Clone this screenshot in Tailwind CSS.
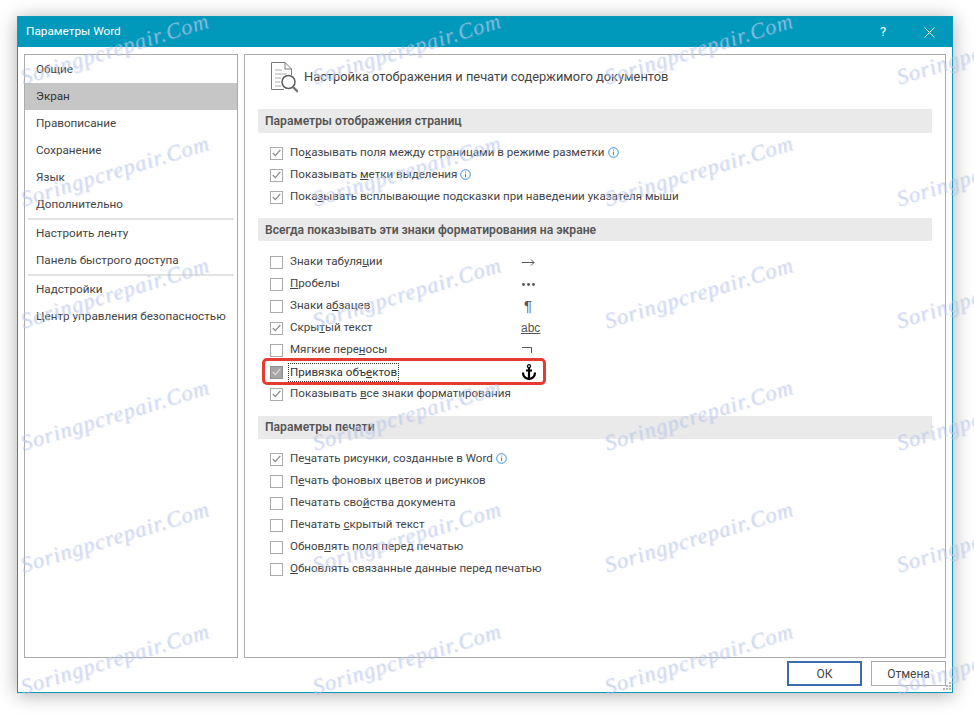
<!DOCTYPE html>
<html lang="ru">
<head>
<meta charset="utf-8">
<script src="https://cdn.jsdelivr.net/npm/@tailwindcss/browser@4"></script>
</head>
<body class="bg-white">
<div class="relative w-[974px] h-[716px] overflow-hidden bg-white pt-[16px] pl-[17px] font-['Roboto','Noto_Sans',sans-serif] text-[11.6px] text-[#444]">
  <div class="w-[936px] h-[677px] flex flex-col border border-[#0f97b8] bg-white shadow-[0_2px_18px_rgba(0,0,0,0.32)]">
    <div class="h-[30px] shrink-0 bg-[#0099bc] flex items-center pl-[8px] text-white text-[11.8px]">
      <span class="flex-1">Параметры Word</span>
      <span class="w-[8px] mr-[36px] text-[13px]">?</span>
      <svg class="mr-[17px]" width="11" height="11" viewBox="0 0 11 11"><path d="M.5.5l10 10M10.5.5l-10 10" stroke="#fff" stroke-width="1" fill="none"/></svg>
    </div>
    <div class="flex gap-[6px] pt-[7px] pl-[6px] pr-[6px] h-[611px] shrink-0">
      <nav class="w-[214px] h-[604px] border border-[#ababab] pt-[1px] whitespace-nowrap text-[11.7px]">
        <div class="h-[27px] flex items-center pl-[11px]">Общие</div>
        <div class="h-[27px] flex items-center pl-[11px] bg-[#c6c6c6] text-[#333]">Экран</div>
        <div class="h-[27px] flex items-center pl-[11px]">Правописание</div>
        <div class="h-[27px] flex items-center pl-[11px]">Сохранение</div>
        <div class="h-[27px] flex items-center pl-[11px]">Язык</div>
        <div class="h-[27px] flex items-center pl-[11px]">Дополнительно</div>
        <div class="mx-[3px] h-[2px] bg-[#e3e3e3]"></div>
        <div class="h-[27px] flex items-center pl-[11px]">Настроить ленту</div>
        <div class="h-[27px] flex items-center pl-[11px]">Панель быстрого доступа</div>
        <div class="mx-[3px] h-[2px] bg-[#e3e3e3]"></div>
        <div class="h-[27px] flex items-center pl-[11px]">Надстройки</div>
        <div class="h-[27px] flex items-center pl-[11px]">Центр управления безопасностью</div>
      </nav>
      <main class="w-[702px] h-[604px] border border-[#ababab] pl-[13px] pr-[13px]">
        <div class="h-[54px] flex items-start pt-[7px] pl-[13px]">
          <svg width="27" height="31" viewBox="0 0 27 31" fill="none" stroke="#7d7777">
            <path d="M.5 .5H14L20.5 7V13M.5 .5V27.5H13" />
            <path d="M14 .5V7H20.5" />
            <path d="M4 8H11M4 12H16M4 16H10M4 20H9M4 24H10" stroke="#aaa"/>
            <circle cx="17.5" cy="20" r="6.5" stroke-width="1.5" stroke="#5c5c5c"/>
            <path d="M22 25L27 30" stroke-width="2.4" stroke="#777"/>
          </svg>
          <span class="ml-[6px] mt-[6px] text-[12.85px] leading-[18px]">Настройка отображения и печати содержимого документов</span>
        </div>

        <div class="h-[24px] bg-[#eaeaea] flex items-center pl-[7px] font-semibold text-[12.15px] text-[#555]">Параметры отображения страниц</div>
        <div class="pt-[9px] pb-[10px]">
          <div class="h-[22px] flex items-center pl-[12px] gap-[7px]"><span class="w-[13px] h-[13px] border border-[#ababab] flex items-center justify-center"><svg width="9" height="8" viewBox="0 0 9 8"><path d="M.8 4L3.3 6.6 8.3.8" fill="none" stroke="#888" stroke-width="1.2"/></svg></span><span class="flex items-center gap-[3px]"><span>По<u>к</u>азывать поля между страницами в режиме разметки</span><svg width="11" height="11" viewBox="0 0 11 11"><circle cx="5.5" cy="5.5" r="4.8" fill="none" stroke="#3f8fd2"/><path d="M5.5 2.6v1M5.5 4.6v3.6" stroke="#3f8fd2"/></svg></span></div>
          <div class="h-[22px] flex items-center pl-[12px] gap-[7px]"><span class="w-[13px] h-[13px] border border-[#ababab] flex items-center justify-center"><svg width="9" height="8" viewBox="0 0 9 8"><path d="M.8 4L3.3 6.6 8.3.8" fill="none" stroke="#888" stroke-width="1.2"/></svg></span><span class="flex items-center gap-[3px]"><span>Показывать <u>м</u>етки выделения</span><svg width="11" height="11" viewBox="0 0 11 11"><circle cx="5.5" cy="5.5" r="4.8" fill="none" stroke="#3f8fd2"/><path d="M5.5 2.6v1M5.5 4.6v3.6" stroke="#3f8fd2"/></svg></span></div>
          <div class="h-[22px] flex items-center pl-[12px] gap-[7px]"><span class="w-[13px] h-[13px] border border-[#ababab] flex items-center justify-center"><svg width="9" height="8" viewBox="0 0 9 8"><path d="M.8 4L3.3 6.6 8.3.8" fill="none" stroke="#888" stroke-width="1.2"/></svg></span><span>Пока<u>з</u>ывать всплывающие подсказки при наведении указателя мыши</span></div>
        </div>

        <div class="h-[23px] pt-[2px] bg-[#eaeaea] flex items-center pl-[7px] font-semibold text-[12.15px] text-[#555]">Всегда показывать эти знаки форматирования на экране</div>
        <div class="pt-[10px] pb-[11px]">
          <div class="h-[22px] flex items-center pl-[12px] gap-[7px]"><span class="w-[13px] h-[13px] border border-[#ababab]"></span><span class="w-[225px]">Знаки табуля<u>ц</u>ии</span><svg width="13" height="7" viewBox="0 0 13 7" fill="none" stroke="#555"><path d="M0 3.5H12M9 .5L12 3.5 9 6.5"/></svg></div>
          <div class="h-[22px] flex items-center pl-[12px] gap-[7px]"><span class="w-[13px] h-[13px] border border-[#ababab]"></span><span class="w-[225px]"><u>П</u>робелы</span><svg width="13" height="3" viewBox="0 0 13 3" fill="#555"><circle cx="1.5" cy="1.5" r="1.4"/><circle cx="6.5" cy="1.5" r="1.4"/><circle cx="11.5" cy="1.5" r="1.4"/></svg></div>
          <div class="h-[22px] flex items-center pl-[12px] gap-[7px]"><span class="w-[13px] h-[13px] border border-[#ababab]"></span><span class="w-[225px]">Знаки а<u>б</u>зацев</span><span class="text-[15px] font-['Liberation_Sans'] ml-[2px] text-[#555]">¶</span></div>
          <div class="h-[22px] flex items-center pl-[12px] gap-[7px]"><span class="w-[13px] h-[13px] border border-[#ababab] flex items-center justify-center"><svg width="9" height="8" viewBox="0 0 9 8"><path d="M.8 4L3.3 6.6 8.3.8" fill="none" stroke="#888" stroke-width="1.2"/></svg></span><span class="w-[225px]">Скры<u>т</u>ый текст</span><span class="font-['Liberation_Sans'] text-[12px] underline text-[#555] -ml-[1px]">abc</span></div>
          <div class="h-[22px] flex items-center pl-[12px] gap-[7px]"><span class="w-[13px] h-[13px] border border-[#ababab]"></span><span class="w-[225px]">Мягкие пере<u>н</u>осы</span><svg width="10" height="6" viewBox="0 0 10 6" fill="none" stroke="#555"><path d="M0 .5H9.5V6"/></svg></div>
          <div class="relative h-[22px] flex items-center pl-[12px] gap-[7px]">
            <span class="w-[13px] h-[13px] border border-[#8f8f8f] bg-[#a9a5a6] flex items-center justify-center"><svg width="9" height="8" viewBox="0 0 9 8"><path d="M.8 4L3.3 6.6 8.3.8" fill="none" stroke="#ddd" stroke-width="1.2"/></svg></span>
            <span class="w-[225px]"><span class="-ml-[2px] px-[1px] border border-dotted border-[#333] text-[#333] inline-block leading-[17px]">Привязка объ<u>е</u>ктов</span></span>
            <svg width="14" height="16" viewBox="0 0 14 16" fill="none" stroke="#000" stroke-width="2.2"><circle cx="7" cy="2.2" r="1.5" stroke-width="1.3"/><path d="M7 3.5V15M4 6.5H10M1 8.5C1 12.5 4 14.5 7 15 10 14.5 13 12.5 13 8.5"/></svg>
            <div class="absolute left-[4px] top-[-3px] w-[284px] h-[27px] border-[3px] border-[#e53b30] rounded-[5px]"></div>
          </div>
          <div class="h-[22px] flex items-center pl-[12px] gap-[7px]"><span class="w-[13px] h-[13px] border border-[#ababab] flex items-center justify-center"><svg width="9" height="8" viewBox="0 0 9 8"><path d="M.8 4L3.3 6.6 8.3.8" fill="none" stroke="#888" stroke-width="1.2"/></svg></span><span>Показывать <u>в</u>се знаки форматирования</span></div>
        </div>

        <div class="h-[23px] bg-[#eaeaea] flex items-center pl-[7px] font-semibold text-[12.15px] text-[#555]">Параметры печати</div>
        <div class="pt-[9px]">
          <div class="h-[22px] flex items-center pl-[12px] gap-[7px]"><span class="w-[13px] h-[13px] border border-[#ababab] flex items-center justify-center"><svg width="9" height="8" viewBox="0 0 9 8"><path d="M.8 4L3.3 6.6 8.3.8" fill="none" stroke="#888" stroke-width="1.2"/></svg></span><span class="flex items-center gap-[3px]"><span>Пе<u>ч</u>атать рисунки, созданные в Word</span><svg width="11" height="11" viewBox="0 0 11 11"><circle cx="5.5" cy="5.5" r="4.8" fill="none" stroke="#3f8fd2"/><path d="M5.5 2.6v1M5.5 4.6v3.6" stroke="#3f8fd2"/></svg></span></div>
          <div class="h-[22px] flex items-center pl-[12px] gap-[7px]"><span class="w-[13px] h-[13px] border border-[#ababab]"></span><span>П<u>е</u>чать фоновых цветов и рисунков</span></div>
          <div class="h-[22px] flex items-center pl-[12px] gap-[7px]"><span class="w-[13px] h-[13px] border border-[#ababab]"></span><span>Печатать сво<u>й</u>ства документа</span></div>
          <div class="h-[22px] flex items-center pl-[12px] gap-[7px]"><span class="w-[13px] h-[13px] border border-[#ababab]"></span><span>Печатать <u>с</u>крытый текст</span></div>
          <div class="h-[22px] flex items-center pl-[12px] gap-[7px]"><span class="w-[13px] h-[13px] border border-[#ababab]"></span><span>Обнов<u>л</u>ять поля перед печатью</span></div>
          <div class="h-[22px] flex items-center pl-[12px] gap-[7px]"><span class="w-[13px] h-[13px] border border-[#ababab]"></span><span><u>О</u>бновлять связанные данные перед печатью</span></div>
        </div>
      </main>
    </div>
    <div class="relative flex justify-end gap-[9px] pr-[6px] pt-[3px]">
      <button class="w-[75px] h-[25px] border-[2px] border-[#3b6cb0] bg-white text-[#444] text-[12px]">ОК</button>
      <button class="w-[75px] h-[25px] border border-[#ababab] bg-white text-[#444] text-[12px]">Отмена</button>
      <svg class="absolute right-[1px] top-[24px]" width="8" height="8" viewBox="0 0 8 8" fill="#b5b5b5"><rect x="6" y="0" width="2" height="2"/><rect x="3" y="3" width="2" height="2"/><rect x="6" y="3" width="2" height="2"/><rect x="0" y="6" width="2" height="2"/><rect x="3" y="6" width="2" height="2"/><rect x="6" y="6" width="2" height="2"/></svg>
    </div>
  </div>

  <!-- watermark overlay -->
  <div class="absolute inset-0 pointer-events-none grid grid-cols-[repeat(4,292px)] auto-rows-[122px] pl-[26px] pt-[14px] font-['Liberation_Serif',serif] italic text-[22px] text-[#c3d0ee]/60 tracking-[1px] [text-shadow:1px_1px_1px_rgba(150,170,220,0.3)]">
    <span class="-rotate-[17deg] w-[190px] h-[34px] whitespace-nowrap origin-bottom-left translate-y-[46px]">Soringpcrepair.Com</span>
    <span class="-rotate-[17deg] w-[190px] h-[34px] whitespace-nowrap origin-bottom-left translate-y-[46px]">Soringpcrepair.Com</span>
    <span class="-rotate-[17deg] w-[190px] h-[34px] whitespace-nowrap origin-bottom-left translate-y-[46px]">Soringpcrepair.Com</span>
    <span class="-rotate-[17deg] w-[190px] h-[34px] whitespace-nowrap origin-bottom-left translate-y-[46px]">Soringpcrepair.Com</span>
    <span class="-rotate-[17deg] w-[190px] h-[34px] whitespace-nowrap origin-bottom-left translate-y-[46px]">Soringpcrepair.Com</span>
    <span class="-rotate-[17deg] w-[190px] h-[34px] whitespace-nowrap origin-bottom-left translate-y-[46px]">Soringpcrepair.Com</span>
    <span class="-rotate-[17deg] w-[190px] h-[34px] whitespace-nowrap origin-bottom-left translate-y-[46px]">Soringpcrepair.Com</span>
    <span class="-rotate-[17deg] w-[190px] h-[34px] whitespace-nowrap origin-bottom-left translate-y-[46px]">Soringpcrepair.Com</span>
    <span class="-rotate-[17deg] w-[190px] h-[34px] whitespace-nowrap origin-bottom-left translate-y-[46px]">Soringpcrepair.Com</span>
    <span class="-rotate-[17deg] w-[190px] h-[34px] whitespace-nowrap origin-bottom-left translate-y-[46px]">Soringpcrepair.Com</span>
    <span class="-rotate-[17deg] w-[190px] h-[34px] whitespace-nowrap origin-bottom-left translate-y-[46px]">Soringpcrepair.Com</span>
    <span class="-rotate-[17deg] w-[190px] h-[34px] whitespace-nowrap origin-bottom-left translate-y-[46px]">Soringpcrepair.Com</span>
    <span class="-rotate-[17deg] w-[190px] h-[34px] whitespace-nowrap origin-bottom-left translate-y-[46px]">Soringpcrepair.Com</span>
    <span class="-rotate-[17deg] w-[190px] h-[34px] whitespace-nowrap origin-bottom-left translate-y-[46px]">Soringpcrepair.Com</span>
    <span class="-rotate-[17deg] w-[190px] h-[34px] whitespace-nowrap origin-bottom-left translate-y-[46px]">Soringpcrepair.Com</span>
    <span class="-rotate-[17deg] w-[190px] h-[34px] whitespace-nowrap origin-bottom-left translate-y-[46px]">Soringpcrepair.Com</span>
    <span class="-rotate-[17deg] w-[190px] h-[34px] whitespace-nowrap origin-bottom-left translate-y-[46px]">Soringpcrepair.Com</span>
    <span class="-rotate-[17deg] w-[190px] h-[34px] whitespace-nowrap origin-bottom-left translate-y-[46px]">Soringpcrepair.Com</span>
    <span class="-rotate-[17deg] w-[190px] h-[34px] whitespace-nowrap origin-bottom-left translate-y-[46px]">Soringpcrepair.Com</span>
    <span class="-rotate-[17deg] w-[190px] h-[34px] whitespace-nowrap origin-bottom-left translate-y-[46px]">Soringpcrepair.Com</span>
    <span class="-rotate-[17deg] w-[190px] h-[34px] whitespace-nowrap origin-bottom-left translate-y-[46px]">Soringpcrepair.Com</span>
    <span class="-rotate-[17deg] w-[190px] h-[34px] whitespace-nowrap origin-bottom-left translate-y-[46px]">Soringpcrepair.Com</span>
    <span class="-rotate-[17deg] w-[190px] h-[34px] whitespace-nowrap origin-bottom-left translate-y-[46px]">Soringpcrepair.Com</span>
    <span class="-rotate-[17deg] w-[190px] h-[34px] whitespace-nowrap origin-bottom-left translate-y-[46px]">Soringpcrepair.Com</span>
  </div>
</div>
</body>
</html>
